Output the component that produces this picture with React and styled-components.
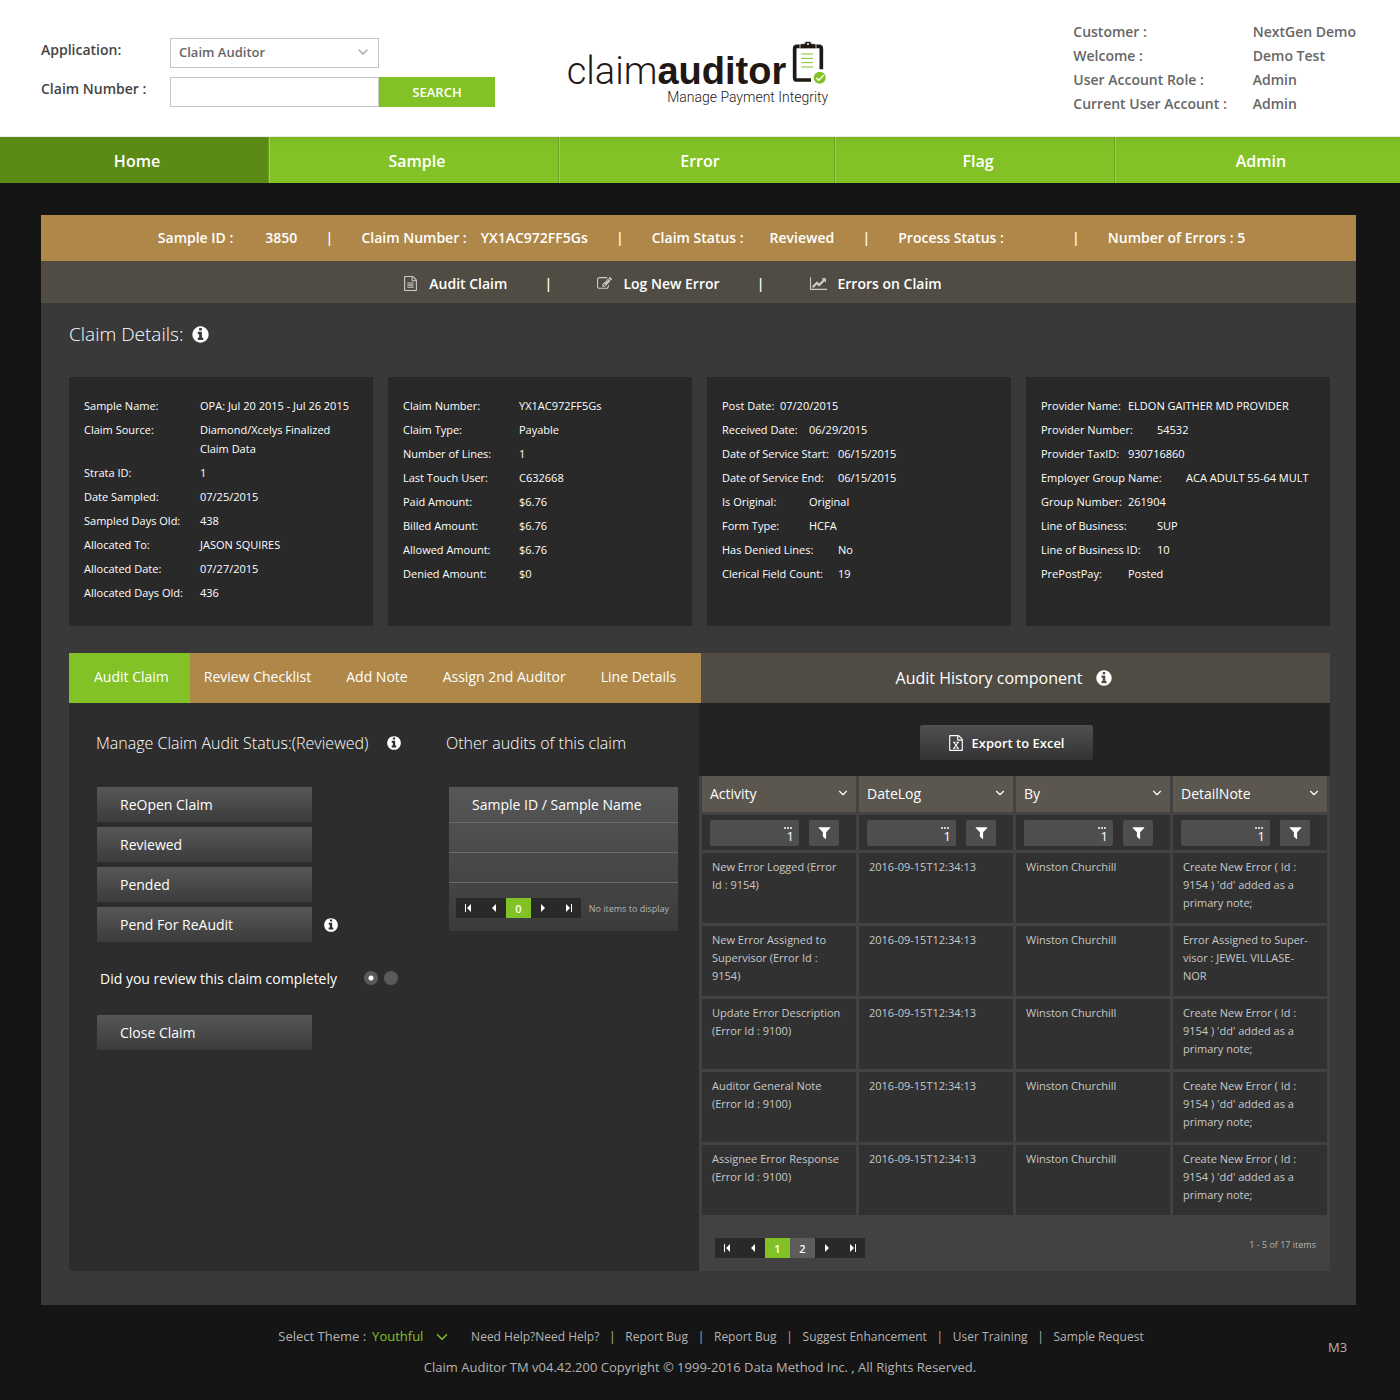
import React from "react";
import styled, { createGlobalStyle } from "styled-components";
import { FiChevronDown } from "react-icons/fi";

const icons = {
    info: "M1152 1376v-160q0-14-9-23t-23-9h-96v-512q0-14-9-23t-23-9h-320q-14 0-23 9t-9 23v160q0 14 9 23t23 9h96v320h-96q-14 0-23 9t-9 23v160q0 14 9 23t23 9h448q14 0 23-9t9-23zm-128-896v-160q0-14-9-23t-23-9h-192q-14 0-23 9t-9 23v160q0 14 9 23t23 9h192q14 0 23-9t9-23zm640 416q0 209-103 385.5t-279.5 279.5-385.5 103-385.5-103-279.5-279.5-103-385.5 103-385.5 279.5-279.5 385.5-103 385.5 103 279.5 279.5 103 385.5z",
    file: "M1596 380q28 28 48 76t20 88v1152q0 40-28 68t-68 28h-1344q-40 0-68-28t-28-68v-1600q0-40 28-68t68-28h896q40 0 88 20t76 48zm-444-244v376h376q-10-29-22-41l-313-313q-12-12-41-22zm384 1528v-1024h-416q-40 0-68-28t-28-68v-416h-768v1536h1280zm-1024-864q0-14 9-23t23-9h704q14 0 23 9t9 23v64q0 14-9 23t-23 9h-704q-14 0-23-9t-9-23v-64zm736 224q14 0 23 9t9 23v64q0 14-9 23t-23 9h-704q-14 0-23-9t-9-23v-64q0-14 9-23t23-9h704zm0 256q14 0 23 9t9 23v64q0 14-9 23t-23 9h-704q-14 0-23-9t-9-23v-64q0-14 9-23t23-9h704z",
    edit: "M888 1184l116-116-152-152-116 116v56h96v96h56zm440-720q-16-16-33 1l-350 350q-17 17-1 33t33-1l350-350q17-17 1-33zm80 594v190q0 119-84.5 203.5t-203.5 84.5h-832q-119 0-203.5-84.5t-84.5-203.5v-832q0-119 84.5-203.5t203.5-84.5h832q63 0 117 25 15 7 18 23 3 17-9 29l-49 49q-14 14-32 8-23-6-45-6h-832q-66 0-113 47t-47 113v832q0 66 47 113t113 47h832q66 0 113-47t47-113v-126q0-13 9-22l64-64q15-15 35-7t20 29zm-96-738l288 288-672 672h-288v-288zm444 132l-92 92-288-288 92-92q28-28 68-28t68 28l152 152q28 28 28 68t-28 68z",
    chart: "M2048 1536v128h-2048v-1536h128v1408h1920zm-128-1248v435q0 21-19.5 29.5t-35.5-7.5l-121-121-633 633q-10 10-23 10t-23-10l-233-233-416 416-192-192 585-585q10-10 23-10t23 10l233 233 464-464-121-121q-16-16-7.5-35.5t29.5-19.5h435q14 0 23 9t9 23z",
    excel: "M1596 380q28 28 48 76t20 88v1152q0 40-28 68t-68 28h-1344q-40 0-68-28t-28-68v-1600q0-40 28-68t68-28h896q40 0 88 20t76 48zm-444-244v376h376q-10-29-22-41l-313-313q-12-12-41-22zm384 1528v-1024h-416q-40 0-68-28t-28-68v-416h-768v1536h1280zm-979-234v106h281v-106h-75l103-161q5-7 10-16.5t7.5-13.5 3.5-4h2q1 4 5 10 2 4 4.5 7.5t6 8 6.5 8.5l107 161h-76v106h291v-106h-68l-192-273 195-282h67v-107h-279v107h74l-103 159q-4 7-10 16.5t-9 13.5l-2 3h-2q-1-4-5-10-6-11-17-23l-106-159h76v-107h-290v107h68l189 272-194 283h-68z",
    filter: "M1595 295q17 41-14 70l-493 493v742q0 42-39 59-13 5-25 5-27 0-45-19l-256-256q-19-19-19-45v-486l-493-493q-31-29-14-70 17-39 59-39h1280q42 0 59 39z",
};

const Icon = ({ name, size }) => (
    <svg width={size} height={size} viewBox={name === "chart" ? "0 0 2048 1792" : "0 0 1792 1792"} fill="currentColor" aria-hidden="true">
        <path d={icons[name]} />
    </svg>
);

const arrows = {
    first: "M1 1h1v8h-1zM7 1v8L3 5z",
    prev: "M7 1v8L3 5z",
    next: "M2 1v8L6 5z",
    last: "M2 1v8L6 5zM7 1h1v8h-1z",
};

const Arrow = ({ dir }) => (
    <svg width="10" height="10" viewBox="0 0 10 10" fill="#fff" aria-hidden="true">
        <path d={arrows[dir]} />
    </svg>
);

const nav = ["Home", "Sample", "Error", "Flag", "Admin"];

const account = [
    ["Customer :", "NextGen Demo"],
    ["Welcome :", "Demo Test"],
    ["User Account Role :", "Admin"],
    ["Current User Account :", "Admin"],
];

// label, value, tab stop of the value
const cards = [
    [
        ["Sample Name:", "OPA: Jul 20 2015 - Jul 26 2015", 4],
        ["Claim Source:", "Diamond/Xcelys Finalized\nClaim Data", 4],
        ["Strata ID:", "1", 4],
        ["Date Sampled:", "07/25/2015", 4],
        ["Sampled Days Old:", "438", 4],
        ["Allocated To:", "JASON SQUIRES", 4],
        ["Allocated Date:", "07/27/2015", 4],
        ["Allocated Days Old:", "436", 4],
    ],
    [
        ["Claim Number:", "YX1AC972FF5Gs", 4],
        ["Claim Type:", "Payable", 4],
        ["Number of Lines:", "1", 4],
        ["Last Touch User:", "C632668", 4],
        ["Paid Amount:", "$6.76", 4],
        ["Billed Amount:", "$6.76", 4],
        ["Allowed Amount:", "$6.76", 4],
        ["Denied Amount:", "$0", 4],
    ],
    [
        ["Post Date:", "07/20/2015", 2],
        ["Received Date:", "06/29/2015", 3],
        ["Date of Service Start:", "06/15/2015", 4],
        ["Date of Service End:", "06/15/2015", 4],
        ["Is Original:", "Original", 3],
        ["Form Type:", "HCFA", 3],
        ["Has Denied Lines:", "No", 4],
        ["Clerical Field Count:", "19", 4],
    ],
    [
        ["Provider Name:", "ELDON GAITHER MD PROVIDER", 3],
        ["Provider Number:", "54532", 4],
        ["Provider TaxID:", "930716860", 3],
        ["Employer Group Name:", "ACA ADULT 55-64 MULT", 5],
        ["Group Number:", "261904", 3],
        ["Line of Business:", "SUP", 4],
        ["Line of Business ID:", "10", 4],
        ["PrePostPay:", "Posted", 3],
    ],
];

const tabs = ["Audit Claim", "Review Checklist", "Add Note", "Assign 2nd Auditor", "Line Details"];
const columns = ["Activity", "DateLog", "By", "DetailNote"];

const stamp = "2016-09-15T12:34:13";
const primaryNote = "Create New Error ( Id :\n9154 ) 'dd' added as a\nprimary note;";
const history = [
    ["New Error Logged (Error\nId : 9154)", stamp, "Winston Churchill", primaryNote],
    ["New Error Assigned to\nSupervisor (Error Id :\n9154)", stamp, "Winston Churchill", "Error Assigned to Super-\nvisor : JEWEL VILLASE-\nNOR"],
    ["Update Error Description\n(Error Id : 9100)", stamp, "Winston Churchill", primaryNote],
    ["Auditor General Note\n(Error Id : 9100)", stamp, "Winston Churchill", primaryNote],
    ["Assignee Error Response\n(Error Id : 9100)", stamp, "Winston Churchill", primaryNote],
];

const footerLinks = ["Need Help?Need Help?", "Report Bug", "Report Bug", "Suggest Enhancement", "User Training", "Sample Request"];

const Pager = ({ pages }) => (
    <PagerBar>
        <PageButton aria-label="First page"><Arrow dir="first" /></PageButton>
        <PageButton aria-label="Previous page"><Arrow dir="prev" /></PageButton>
        {pages.map((page, i) => (
            <PageButton key={page} $kind={i === 0 ? "current" : "page"}>{page}</PageButton>
        ))}
        <PageButton aria-label="Next page"><Arrow dir="next" /></PageButton>
        <PageButton aria-label="Last page"><Arrow dir="last" /></PageButton>
    </PagerBar>
);

const ClipboardLogo = () => (
    <svg width="35" height="45" viewBox="755 62 105 135" fill="none" aria-hidden="true">
        <path d="M812 182H770Q763 182 763 175V88Q763 81 770 81H836Q843 81 843 88V150" stroke="#1f1815" strokeWidth="11" />
        <path d="M779 88V77Q779 73 784 73H792Q793 66 803 66T814 73H822Q827 73 827 77V88Z" fill="#1f1815" stroke="#fff" strokeWidth="2" />
        <circle cx="803" cy="74" r="3" fill="#fff" />
        <path d="M783 104H818M783 117H818M783 130H818M783 143H818" stroke="#82c226" strokeWidth="3" />
        <circle cx="838" cy="175" r="18" fill="#82c226" />
        <path d="M828 176L835 183L850 168" stroke="#fff" strokeWidth="4" />
    </svg>
);

export default function App() {
    return (
        <>
            <GlobalStyle />
            <Header>
                <SearchForm onSubmit={(e) => e.preventDefault()}>
                    <FieldLabel htmlFor="application">Application:</FieldLabel>
                    <SelectWrap>
                        <Select id="application" defaultValue="Claim Auditor">
                            <option>Claim Auditor</option>
                        </Select>
                        <FiChevronDown size={16} />
                    </SelectWrap>
                    <span />
                    <FieldLabel htmlFor="claim-number">Claim Number :</FieldLabel>
                    <TextInput id="claim-number" type="text" />
                    <SearchButton type="submit">SEARCH</SearchButton>
                </SearchForm>
                <Logo href="#">
                    <LogoTop>
                        <LogoName>claim<b>auditor</b></LogoName>
                        <ClipboardLogo />
                    </LogoTop>
                    <Tagline>Manage Payment Integrity</Tagline>
                </Logo>
                <Account>
                    {account.map(([label, value]) => (
                        <React.Fragment key={label}>
                            <dt>{label}</dt>
                            <dd>{value}</dd>
                        </React.Fragment>
                    ))}
                </Account>
            </Header>
            <Nav>
                {nav.map((item) => (
                    <NavLink key={item} href="#" $active={item === "Home"}>{item}</NavLink>
                ))}
            </Nav>
            <Main>
                <SampleBar>
                    <Field $gap={32}><span>Sample ID :</span><span>3850</span></Field>
                    <Bar>|</Bar>
                    <Field $gap={14}><span>Claim Number :</span><span>YX1AC972FF5Gs</span></Field>
                    <Bar>|</Bar>
                    <Field $gap={26}><span>Claim Status :</span><span>Reviewed</span></Field>
                    <Bar>|</Bar>
                    <Field $gap={40}><span>Process Status :</span><span /></Field>
                    <Bar>|</Bar>
                    <span>Number of Errors : 5</span>
                </SampleBar>
                <ActionBar>
                    <ActionLink href="#"><Icon name="file" size={15} />Audit Claim</ActionLink>
                    <Bar>|</Bar>
                    <ActionLink href="#"><Icon name="edit" size={15} />Log New Error</ActionLink>
                    <Bar>|</Bar>
                    <ActionLink href="#"><Icon name="chart" size={17} />Errors on Claim</ActionLink>
                </ActionBar>
                <Content>
                    <Title>Claim Details: <Icon name="info" size={19} /></Title>
                    <Cards>
                        {cards.map((rows, i) => (
                            <Card key={i}>
                                {rows.map(([label, value, stop]) => (
                                    <CardRow key={label} $stop={stop}>
                                        <dt>{label}</dt>
                                        <dd>{value}</dd>
                                    </CardRow>
                                ))}
                            </Card>
                        ))}
                    </Cards>
                    <PanelHead>
                        <Tabs>
                            {tabs.map((tab, i) => (
                                <Tab key={tab} $active={i === 0}>{tab}</Tab>
                            ))}
                        </Tabs>
                        <HistoryTitle>Audit History component <Icon name="info" size={18} /></HistoryTitle>
                    </PanelHead>
                    <PanelBody>
                        <Manage>
                            <div>
                                <SubTitle>Manage Claim Audit Status:(Reviewed) <Icon name="info" size={16} /></SubTitle>
                                <ButtonStack>
                                    <StatusButton>ReOpen Claim</StatusButton>
                                    <StatusButton>Reviewed</StatusButton>
                                    <StatusButton>Pended</StatusButton>
                                    <WithInfo>
                                        <StatusButton>Pend For ReAudit</StatusButton>
                                        <Icon name="info" size={16} />
                                    </WithInfo>
                                    <Question role="radiogroup" aria-labelledby="complete-label">
                                        <span id="complete-label">Did you review this claim completely</span>
                                        <Radio type="radio" name="complete" aria-label="Yes" defaultChecked />
                                        <Radio type="radio" name="complete" aria-label="No" />
                                    </Question>
                                    <StatusButton>Close Claim</StatusButton>
                                </ButtonStack>
                            </div>
                            <div>
                                <SubTitle>Other audits of this claim</SubTitle>
                                <Audits>
                                    <AuditTable>
                                        <thead>
                                            <tr><th>Sample ID / Sample Name</th></tr>
                                        </thead>
                                        <tbody>
                                            <tr><td /></tr>
                                            <tr><td /></tr>
                                        </tbody>
                                    </AuditTable>
                                    <AuditFooter>
                                        <Pager pages={[0]} />
                                        <Small>No items to display</Small>
                                    </AuditFooter>
                                </Audits>
                            </div>
                        </Manage>
                        <History>
                            <ExportRow>
                                <ExportButton><Icon name="excel" size={16} />Export to Excel</ExportButton>
                            </ExportRow>
                            <HistoryTable>
                                <thead>
                                    <tr>
                                        {columns.map((column) => (
                                            <th key={column}>
                                                <HeadCell>{column}<FiChevronDown size={14} /></HeadCell>
                                            </th>
                                        ))}
                                    </tr>
                                    <tr>
                                        {columns.map((column) => (
                                            <td key={column}>
                                                <FilterCell>
                                                    <FilterField>
                                                        <input type="text" aria-label={`Filter ${column}`} defaultValue="1" />
                                                        <Dots><i /><i /><i /></Dots>
                                                    </FilterField>
                                                    <FilterButton aria-label={`Apply ${column} filter`}><Icon name="filter" size={15} /></FilterButton>
                                                </FilterCell>
                                            </td>
                                        ))}
                                    </tr>
                                </thead>
                                <tbody>
                                    {history.map((row, i) => (
                                        <tr key={i}>
                                            {row.map((cell, j) => <td key={j}>{cell}</td>)}
                                        </tr>
                                    ))}
                                </tbody>
                            </HistoryTable>
                            <HistoryFooter>
                                <Pager pages={[1, 2]} />
                                <Small>1 - 5 of 17 items</Small>
                            </HistoryFooter>
                        </History>
                    </PanelBody>
                </Content>
            </Main>
            <Footer>
                <FooterText>
                    <FooterRow>
                        <label htmlFor="theme">Select Theme :</label>
                        <ThemeWrap>
                            <ThemeSelect id="theme" defaultValue="Youthful">
                                <option>Youthful</option>
                            </ThemeSelect>
                            <FiChevronDown size={18} />
                        </ThemeWrap>
                        <FooterLinks>
                            {footerLinks.map((link, i) => (
                                <React.Fragment key={i}>
                                    {i > 0 && <Bar>|</Bar>}
                                    <a href="#">{link}</a>
                                </React.Fragment>
                            ))}
                        </FooterLinks>
                    </FooterRow>
                    <Copyright>Claim Auditor TM v04.42.200 Copyright © 1999-2016 Data Method Inc. , All Rights Reserved.</Copyright>
                </FooterText>
                <Version>M3</Version>
            </Footer>
        </>
    );
}

const GlobalStyle = createGlobalStyle`
*{
    box-sizing: border-box;
}
body{
    margin: 0;
    background: #151515;
    color: #fff;
    font-family: "Open Sans", "Noto Sans", sans-serif;
    font-size: 14px;
}
button, input, select{
    font: inherit;
    color: inherit;
    margin: 0;
    border: 0;
    border-radius: 0;
}
button{
    cursor: pointer;
    padding: 0;
}
a{
    color: inherit;
    text-decoration: none;
}
dl, dd, h1, h2, p{
    margin: 0;
}
svg{
    flex: none;
}
`;

const Header = styled.header`
    display: grid;
    grid-template-columns: 1fr auto 1fr;
    align-items: start;
    min-height: 137px;
    padding: 0 44px 0 41px;
    background: #fff;
    border-bottom: 1px solid #ececec;
`;

const SearchForm = styled.form`
    display: grid;
    grid-template-columns: 129px 209px 116px;
    grid-auto-rows: 30px;
    row-gap: 9px;
    padding-top: 38px;
    color: #666;
    font-weight: 600;
`;

const FieldLabel = styled.label`
    line-height: 24px;
    color: #444;
`;

const SelectWrap = styled.div`
    position: relative;
    svg{
        position: absolute;
        right: 8px;
        top: 6px;
        color: #a5a5a5;
    }
`;

const Select = styled.select`
    appearance: none;
    width: 100%;
    height: 30px;
    padding: 0 8px 2px;
    border: 1px solid #c4c4c4;
    background: #fff;
    font-size: 13px;
`;

const TextInput = styled.input`
    width: 100%;
    padding: 0 8px;
    border: 1px solid #c4c4c4;
    background: #fff;
`;

const SearchButton = styled.button`
    background: #82c226;
    color: #fff;
    font-size: 13px;
    font-weight: 600;
`;

const Logo = styled.a`
    display: flex;
    flex-direction: column;
    padding-top: 40px;
    color: #1f1815;
`;

const LogoTop = styled.div`
    display: flex;
    gap: 6px;
    padding-right: 3px;
`;

const LogoName = styled.span`
    padding-top: 13px;
    font-family: Roboto, "Liberation Sans", sans-serif;
    font-size: 38px;
    font-weight: 300;
    line-height: 36px;
    b{
        font-family: "Liberation Sans", sans-serif;
        font-weight: 700;
    }
`;

const Tagline = styled.span`
    align-self: flex-end;
    padding-right: 2px;
    font-family: Roboto, "Liberation Sans", sans-serif;
    font-size: 14px;
    font-weight: 300;
    line-height: 16px;
`;

const Account = styled.dl`
    display: grid;
    grid-template-columns: auto auto;
    justify-content: end;
    column-gap: 26px;
    padding-top: 20px;
    color: #666;
    font-weight: 600;
    line-height: 24px;
`;

const Nav = styled.nav`
    display: grid;
    grid-template-columns: 269fr 290fr 276fr 280fr 285fr;
    height: 46px;
`;

const NavLink = styled.a`
    display: flex;
    align-items: center;
    justify-content: center;
    padding: 2px 0 0 6px;
    background: ${(p) => (p.$active ? "#5b8b14" : "linear-gradient(#7ab524, #82c226 8px)")};
    border-left: ${(p) => (p.$active ? "0" : "1px solid #9bd544")};
    border-right: 1px solid #6ba01e;
    font-size: 16px;
    font-weight: 600;
    &:last-child{
        border-right: 0;
    }
`;

const Main = styled.main`
    margin: 32px 44px 0 41px;
    background: #393939;
`;

const SampleBar = styled.div`
    display: flex;
    align-items: center;
    justify-content: center;
    gap: 31px;
    height: 46px;
    padding: 0 0 2px 6px;
    background: #af8849;
    font-weight: 600;
`;

const Field = styled.span`
    display: flex;
    gap: ${(p) => p.$gap}px;
`;

const Bar = styled.span`
    width: 2px;
    display: flex;
    justify-content: center;
`;

const ActionBar = styled.div`
    display: flex;
    align-items: center;
    justify-content: center;
    gap: 48px;
    height: 42px;
    padding: 2px 52px 0 0;
    background: #514c43;
    font-weight: 600;
    ${Bar}{
        margin-left: -8px;
    }
`;

const ActionLink = styled.a`
    display: flex;
    align-items: center;
    gap: 11px;
    svg{
        color: #ccc;
    }
`;

const Content = styled.div`
    padding: 15px 26px 34px 28px;
`;

const Title = styled.h1`
    display: flex;
    align-items: center;
    gap: 8px;
    height: 32px;
    font-size: 19px;
    font-weight: 300;
`;

const Cards = styled.div`
    display: grid;
    grid-template-columns: repeat(4, 1fr);
    gap: 15px;
    margin: 27px 0;
`;

const Card = styled.dl`
    display: flex;
    flex-direction: column;
    gap: 5px;
    padding: 19px 15px 24px;
    background: #292929;
    font-size: 11px;
    line-height: 19px;
`;

const CardRow = styled.div`
    display: flex;
    white-space: pre;
    dt{
        min-width: ${(p) => p.$stop * 29}px;
    }
`;

const PanelHead = styled.div`
    display: flex;
    height: 50px;
    background: #514c43;
`;

const Tabs = styled.div`
    display: flex;
    background: #af8849;
    padding-right: 4px;
`;

const Tab = styled.button`
    padding: 0 21px 3px ${(p) => (p.$active ? 25 : 14)}px;
    background: ${(p) => (p.$active ? "#82c226" : "none")};
`;

const HistoryTitle = styled.h2`
    display: flex;
    flex: 1;
    align-items: center;
    justify-content: center;
    gap: 12px;
    padding-right: 23px;
    font-size: 16px;
    font-weight: 400;
`;

const PanelBody = styled.div`
    display: grid;
    grid-template-columns: 630fr 631fr;
`;

const Manage = styled.div`
    display: grid;
    grid-template-columns: 350fr 232fr;
    padding: 26px 21px 0 27px;
    background: #2d2d2d;
`;

const SubTitle = styled.h2`
    display: flex;
    align-items: center;
    gap: 18px;
    height: 28px;
    margin-bottom: 30px;
    font-size: 16px;
    font-weight: 300;
`;

const ButtonStack = styled.div`
    display: flex;
    flex-direction: column;
    align-items: flex-start;
    gap: 5px;
    padding-left: 1px;
`;

const StatusButton = styled.button`
    width: 215px;
    height: 35px;
    padding-left: 23px;
    background: linear-gradient(#575757, #3b3b3b);
    text-align: left;
`;

const WithInfo = styled.div`
    display: flex;
    align-items: center;
    gap: 11px;
`;

const Question = styled.div`
    display: flex;
    align-items: center;
    gap: 6px;
    height: 63px;
    padding: 0 0 1px 3px;
    span{
        margin-right: 21px;
    }
`;

const Radio = styled.input`
    appearance: none;
    width: 14px;
    height: 14px;
    border-radius: 50%;
    background: #5a5a5a;
    &:checked{
        background: radial-gradient(circle, #fff 2px, #5a5a5a 3px);
    }
`;

const Audits = styled.div`
    margin-left: 3px;
    background: linear-gradient(#575757, #3b3b3b);
`;

const AuditTable = styled.table`
    width: 100%;
    border-spacing: 0;
    th, td{
        height: 30px;
        padding: 0 23px;
        border-bottom: 1px solid #6a6a6a;
        font-weight: 400;
        text-align: left;
    }
    th{
        height: 36px;
    }
`;

const AuditFooter = styled.div`
    display: flex;
    align-items: center;
    justify-content: space-between;
    height: 48px;
    padding: 2px 9px 0 7px;
`;

const PagerBar = styled.div`
    display: flex;
`;

const pageColors = { current: "#82c226", page: "#5c5c5c" };

const PageButton = styled.button`
    display: flex;
    align-items: center;
    justify-content: center;
    width: 25px;
    height: 20px;
    background: ${(p) => pageColors[p.$kind] || "#292929"};
    font-size: 11px;
    font-weight: 600;
`;

const Small = styled.span`
    color: #b4b4b4;
    font-size: 9px;
`;

const History = styled.div`
    background: #424242;
`;

const ExportRow = styled.div`
    display: flex;
    justify-content: center;
    padding: 22px 16px 16px 0;
    background: #232323;
`;

const ExportButton = styled.button`
    display: flex;
    align-items: center;
    justify-content: center;
    gap: 7px;
    width: 173px;
    height: 35px;
    border-radius: 2px;
    background: linear-gradient(#505050, #333);
    font-size: 13px;
    font-weight: 600;
`;

const HistoryTable = styled.table`
    width: 100%;
    padding-right: 3px;
    border-spacing: 0;
    table-layout: fixed;
    th, td{
        padding: 0;
        border: solid #424242;
        border-width: 0 0 3px 3px;
    }
    th{
        height: 39px;
        background: #5b564e;
        font-weight: 400;
        text-align: left;
    }
    td{
        height: 38px;
        background: #313131;
    }
    tbody td{
        height: 73px;
        padding: 5px 0 0 10px;
        vertical-align: top;
        color: #c8c8c8;
        font-size: 11px;
        line-height: 18px;
        white-space: pre;
    }
`;

const HeadCell = styled.div`
    display: flex;
    align-items: center;
    justify-content: space-between;
    padding: 0 6px 2px 8px;
`;

const FilterCell = styled.div`
    display: flex;
    gap: 10px;
    padding: 0 17px 0 8px;
`;

const FilterField = styled.div`
    position: relative;
    flex: 1;
    input{
        display: block;
        width: 100%;
        height: 26px;
        padding: 7px 5px 0;
        border-radius: 2px;
        background: #4e4e4e;
        font-size: 13px;
        text-align: right;
    }
`;

const Dots = styled.span`
    position: absolute;
    top: 7px;
    right: 7px;
    display: flex;
    gap: 1px;
    i{
        width: 2px;
        height: 2px;
        background: #ccc;
    }
`;

const FilterButton = styled.button`
    display: flex;
    align-items: center;
    justify-content: center;
    width: 30px;
    height: 26px;
    border-radius: 2px;
    background: #4e4e4e;
`;

const HistoryFooter = styled.div`
    display: flex;
    justify-content: space-between;
    height: 53px;
    padding: 20px 14px 0 16px;
`;

const Footer = styled.footer`
    display: flex;
    align-items: center;
    min-height: 95px;
    padding: 0 52px 12px 72px;
    color: #b4b4b4;
    font-size: 13px;
`;

const FooterText = styled.div`
    display: flex;
    flex: 1;
    flex-direction: column;
    align-items: center;
    gap: 7px;
    padding-top: 10px;
`;

const FooterRow = styled.div`
    display: flex;
    align-items: center;
    height: 24px;
    padding-left: 22px;
`;

const ThemeWrap = styled.div`
    position: relative;
    margin: 0 20px 0 6px;
    color: #82c226;
    svg{
        position: absolute;
        right: 0;
        top: 2px;
        pointer-events: none;
    }
`;

const ThemeSelect = styled.select`
    appearance: none;
    height: 20px;
    padding: 0 27px 0 0;
    background: none;
`;

const FooterLinks = styled.div`
    display: flex;
    gap: 12px;
    font-size: 12px;
`;

const Copyright = styled.p`
    line-height: 24px;
`;

const Version = styled.span`
    width: 20px;
`;
